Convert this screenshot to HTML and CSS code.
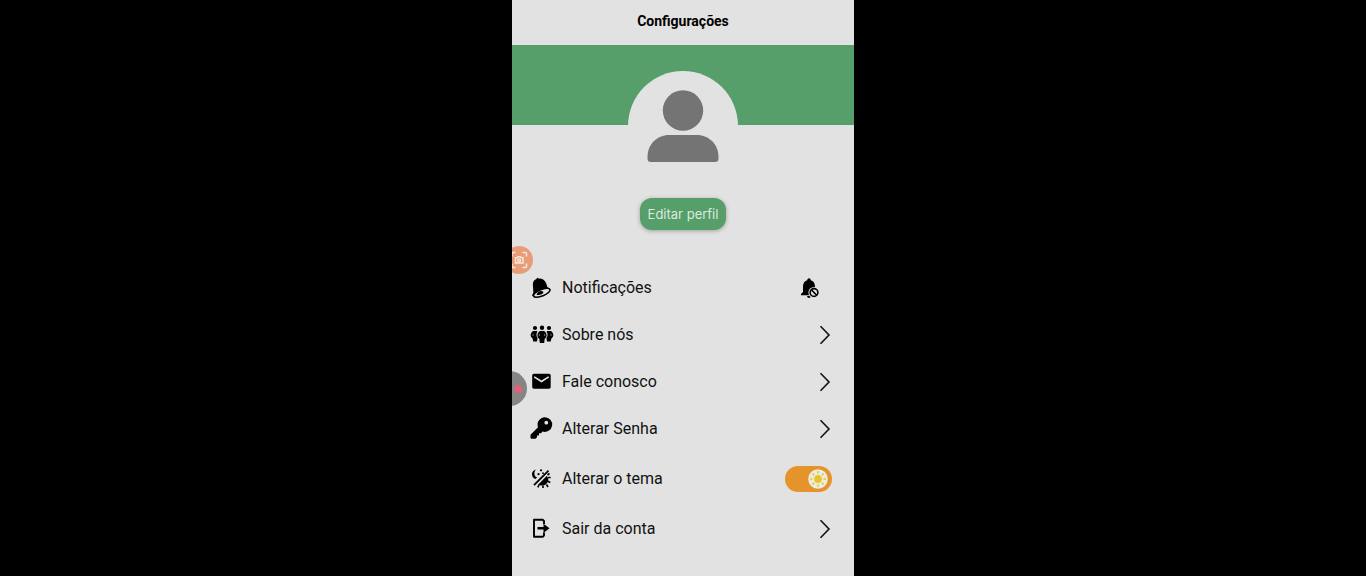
FILE: index.html
```html
<!DOCTYPE html>
<html lang="pt-BR">
<head>
<meta charset="utf-8">
<meta name="viewport" content="width=device-width, initial-scale=1">
<title>Configurações</title>
<link rel="stylesheet" href="styles.css">
</head>
<body>
<main class="phone">
  <header class="header"><h1 class="title">Configurações</h1></header>
  <section class="profile">
    <div class="banner"></div>
    <div class="avatar">
      <svg width="72" height="72" viewBox="0 0 72 72" fill="#747474" aria-hidden="true">
        <circle cx="36" cy="20.500" r="20.200"/>
        <path d="M22 45H50C62 45 71.500 54.500 71.500 67V68.500Q71.500 72 68 72H4Q.5 72 .5 68.500V67C.5 54.500 10 45 22 45Z"/>
      </svg>
    </div>
    <button class="edit" type="button">Editar perfil</button>
  </section>

  <ul class="menu">
    <li><button class="row" type="button">
      <svg class="icon" viewBox="0 0 24 24" aria-hidden="true">
        <path d="M3.300 20.500 2 19.500 3.400 16.500 2.800 8.500C2.800 5.500 4.500 3.600 6.500 3L7 1.700 8.800 2.400C12 2.200 15.300 4 16.300 7.500L17.300 11 20.500 13.200C20.500 18 12 22 3.300 20.500Z"/>
        <ellipse cx="11.800" cy="16.800" rx="8.800" ry="3.200" transform="rotate(-22 11.800 16.800)" fill="#e2e2e2" stroke="#000" stroke-width="1.500"/>
        <path d="M6.500 18.900C7.500 15 12 14 13.600 16.200Q12 19.500 6.500 18.900Z"/>
      </svg>
      <span class="label">Notificações</span>
      <svg class="muted" width="20" height="22" viewBox="0 0 20 22" aria-hidden="true">
        <path d="M1 18.300V17L3 15V9.500C3 6 4.800 3.900 7.300 3.200V2.500Q9 .2 10.700 2.500V3.200C13.300 3.900 15 6 15 9.500V18.300Z"/>
        <path d="M7 19H11Q10.800 21 9 21T7 19Z"/>
        <circle cx="14" cy="15.500" r="5.600" fill="#e2e2e2"/>
        <circle cx="14" cy="15.500" r="3.900" fill="none" stroke="#000" stroke-width="1.600"/>
        <path d="M11.500 13 16.500 18" stroke="#000" stroke-width="1.700"/>
      </svg>
    </button></li>
    <li><button class="row" type="button">
      <svg class="icon" viewBox="0 0 24 24" aria-hidden="true">
        <circle cx="5" cy="5" r="2.100"/><circle cx="12" cy="4.800" r="2.200"/><circle cx="19" cy="5" r="2.100"/>
        <path d="M3.200 8H6.800L7.400 8.700Q5.400 12 7.600 15L7 18.500H3.300L2.600 15.500Q-.4 13.500 1.200 10 2 8.300 3.200 8ZM20.800 8H17.200L16.600 8.700Q18.600 12 16.400 15L17 18.500H20.700L21.400 15.500Q24.400 13.500 22.800 10 22 8.300 20.800 8Z"/>
        <path d="M9.800 8H14.200Q18 11 15.800 15L14.700 15.800 14.200 20H9.800L9.300 15.800 8.200 15Q6 11 9.800 8Z"/>
        <path d="M3 10.800V13M21 10.800V13M9.300 10.800V13M14.700 10.800V13" stroke="#e2e2e2" stroke-width=".5"/>
      </svg>
      <span class="label">Sobre nós</span>
      <svg class="chevron" viewBox="0 0 12 20" aria-hidden="true"><path d="M1.500 1.200 10 10 1.500 18.800"/></svg>
    </button></li>
    <li><button class="row" type="button">
      <svg class="icon" viewBox="0 0 24 24" aria-hidden="true">
        <rect x="2.200" y="3.700" width="18.500" height="15" rx="1.700"/>
        <path d="M4.200 6.900 11.500 11.500 18.700 6.900" fill="none" stroke="#e2e2e2" stroke-width="1.700"/>
      </svg>
      <span class="label">Fale conosco</span>
      <svg class="chevron" viewBox="0 0 12 20" aria-hidden="true"><path d="M1.500 1.200 10 10 1.500 18.800"/></svg>
    </button></li>
    <li><button class="row" type="button">
      <svg class="icon" viewBox="0 0 24 24" aria-hidden="true">
        <path fill-rule="evenodd" d="M14.800 .3A7.300 7.300 0 1 1 12.500 14.500L11 16.200H9V18.400H7V20.200L5.500 21.700H1.300L.5 20.900V17.700L8 10.200A7.300 7.300 0 0 1 14.800 .3ZM16.300 3.800A1.900 1.900 0 1 0 16.300 7.600 1.900 1.900 0 0 0 16.300 3.800Z"/>
      </svg>
      <span class="label">Alterar Senha</span>
      <svg class="chevron" viewBox="0 0 12 20" aria-hidden="true"><path d="M1.500 1.200 10 10 1.500 18.800"/></svg>
    </button></li>
  </ul>

  <ul class="menu menu-tall">
    <li><label class="row">
      <svg class="icon" viewBox="0 0 24 24" aria-hidden="true">
        <path d="M4 18.200 18.500 3.700" stroke="#000" stroke-width="1.800"/>
        <path d="M6 2.500C.8 3.500 .8 10.500 5.300 12L7.200 10.500C4 9.500 3.500 5 6 2.500Z"/>
        <circle cx="8.500" cy="7.200" r="1.100"/><circle cx="11" cy="3.300" r="1.100"/><circle cx="13" cy="6.200" r=".9"/>
        <path d="M8 17.700 16.700 9C19.500 12 18.300 15 16.200 16.900 14 18.700 11 18.900 8 17.700Z"/>
        <path d="M9 18 7.800 20.300M13 18.500V21M16.500 17.500 18 20M17.800 14.300 20.300 15.500M18 10.500H20.700M17.500 8 19.500 6.500" stroke="#000" stroke-width="1.600"/>
      </svg>
      <span class="label">Alterar o tema</span>
      <span class="switch">
        <input class="switch-input" type="checkbox" role="switch" checked>
        <svg class="sun" viewBox="0 0 20 20" aria-hidden="true">
          <circle cx="10" cy="10" r="9.800" fill="#ededdf"/>
          <circle cx="10" cy="10" r="3.900" fill="#e8c52c"/>
          <path d="M10 2.200V4.500M10 15.500V17.800M2.200 10H4.500M15.500 10H17.800M4.500 4.500 6.100 6.100M13.900 13.900 15.500 15.500M4.500 15.500 6.100 13.900M13.900 6.100 15.500 4.500" stroke="#dcc23e" stroke-width="1.500"/>
        </svg>
      </span>
    </label></li>
    <li><button class="row" type="button">
      <svg class="icon" viewBox="0 0 24 24" aria-hidden="true">
        <path d="M14 7V4L12.700 2.800H4V19.700H12.700L14 18.500V15.500" fill="none" stroke="#000" stroke-width="1.900" stroke-linejoin="round"/>
        <path d="M7.500 10H13.500V6.700L19.500 11.300 13.500 15.900V12.600H7.500Z"/>
      </svg>
      <span class="label">Sair da conta</span>
      <svg class="chevron" viewBox="0 0 12 20" aria-hidden="true"><path d="M1.500 1.200 10 10 1.500 18.800"/></svg>
    </button></li>
  </ul>

  <button class="float capture" type="button" aria-label="Capturar tela">
    <svg width="28" height="28" viewBox="0 0 28 28" fill="none" stroke="#f8e7dd" stroke-width="1.500" aria-hidden="true">
      <path d="M7 10.500V7.500Q7 6.500 8 6.500H10.500M17.500 6.500H20.500Q21.500 6.500 21.500 7.500V10.500M21.500 17.500V20.500Q21.500 21.500 20.500 21.500H17.500M10.500 21.500H8Q7 21.500 7 20.500V17.500"/>
      <path d="M10.500 11.700H12L13 10.700H15.500L16.500 11.700H18V17H10.500Z"/>
      <circle cx="14.200" cy="14.200" r="1.300"/>
    </svg>
  </button>
  <button class="float record" type="button" aria-label="Gravar tela"><span class="dot"></span></button>
</main>
</body>
</html>
```
FILE: styles.css
```css
* { box-sizing: border-box; }

body {
  margin: 0;
  background: #000;
  color: #111;
  font-family: Roboto, "Liberation Sans", sans-serif;
}

button {
  border: 0;
  font: inherit;
  color: inherit;
  cursor: pointer;
}

.phone {
  position: relative;
  max-width: 342px;
  min-height: 100vh;
  margin: 0 auto;
  overflow: hidden;
  background: #e2e2e2;
}

.header {
  display: flex;
  justify-content: center;
  padding: 11px 16px 14px;
}

.title {
  margin: 0;
  font-size: 14px;
  line-height: 20px;
  font-weight: 700;
  color: #000;
}

.profile {
  display: flex;
  flex-direction: column;
  align-items: center;
}

.banner {
  width: 100%;
  height: 80px;
  background: #569e6a;
}

.avatar {
  display: grid;
  place-items: center;
  width: 110px;
  height: 110px;
  margin-top: -54px;
  border-radius: 50%;
  background: #e2e2e2;
}

.edit {
  margin-top: 17px;
  padding: 6px 8px;
  border-radius: 12px;
  background: #569e6a;
  box-shadow: 0 1px 4px rgba(0, 0, 0, .3);
  color: #dcebdc;
  font-family: Inter, Roboto, sans-serif;
  font-size: 13px;
  line-height: 20px;
}

.menu {
  margin: 34px 0 0;
  padding: 0;
  list-style: none;
}

.menu-tall { margin-top: 2px; }

.row {
  display: flex;
  align-items: center;
  gap: 8px;
  width: 100%;
  height: 47px;
  padding: 0 22px 0 18px;
  background: none;
  text-align: left;
  font-size: 16px;
  line-height: 20px;
  cursor: pointer;
}

.menu-tall .row { height: 50px; }

.icon {
  flex: none;
  width: 24px;
  height: 24px;
}

.label { flex: 1; }

.muted { margin-right: 12px; }

.chevron {
  width: 12px;
  height: 20px;
  margin-right: 1px;
  fill: none;
  stroke: #111;
  stroke-width: 1.6;
}

.switch {
  position: relative;
  display: flex;
}

.switch-input {
  appearance: none;
  width: 47px;
  height: 26px;
  margin: 0;
  border-radius: 13px;
  background: #bbb;
  cursor: pointer;
}

.switch-input:checked { background: #e5932b; }

.sun {
  position: absolute;
  top: 3px;
  left: 4px;
  width: 20px;
  height: 20px;
  pointer-events: none;
}

.switch-input:checked + .sun { left: 23px; }

.float {
  position: absolute;
  display: grid;
  padding: 0;
  border-radius: 50%;
}

.capture {
  top: 246px;
  left: -7px;
  width: 28px;
  height: 28px;
  background: #e79e78;
}

.record {
  top: 371px;
  left: -20px;
  width: 35px;
  height: 35px;
  align-items: center;
  justify-content: end;
  padding-right: 5px;
  background: #858585;
}

.dot {
  width: 8px;
  height: 8px;
  border-radius: 50%;
  background: #e4607a;
}
```
